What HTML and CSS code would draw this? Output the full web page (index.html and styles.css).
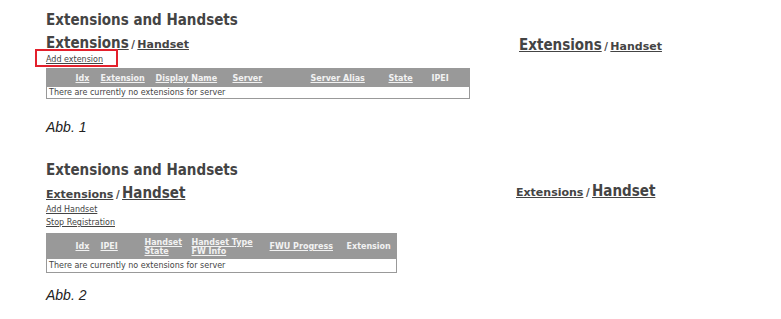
FILE: index.html
```html
<!DOCTYPE html>
<html>
  <head>
    <meta charset="utf8" />
    <title> Extensions and Handsets </title>
    <link rel="stylesheet" href="styles.css">
  </head>
  <body>
    <div class="figure first">
      <div class="page">
        <h1>Extensions and Handsets</h1>
        <div class="nav"><a class="big">Extensions</a> / <a>Handset</a></div>
        <div class="links">
          <a class="marked">Add extension</a>
        </div>
        <table class="list ext">
          <colgroup>
            <col style="width:26px"><col style="width:25px"><col style="width:55px"><col style="width:77px">
            <col style="width:78px"><col style="width:78px"><col style="width:43px"><col style="width:41px">
          </colgroup>
          <tr>
            <th></th><th><a>Idx</a></th><th><a>Extension</a></th><th><a>Display Name</a></th>
            <th><a>Server</a></th><th><a>Server Alias</a></th><th><a>State</a></th><th>IPEI</th>
          </tr>
          <tr><td colspan="8">There are currently no extensions for server</td></tr>
        </table>
      </div>
      <div class="nav side"><a class="big">Extensions</a> / <a>Handset</a></div>
    </div>
    <p class="caption">Abb. 1</p>

    <div class="figure second">
      <div class="page">
        <h1>Extensions and Handsets</h1>
        <div class="nav"><a>Extensions</a> / <a class="big">Handset</a></div>
        <div class="links">
          <a>Add Handset</a>
          <a>Stop Registration</a>
        </div>
        <table class="list hs">
          <colgroup>
            <col style="width:26px"><col style="width:25px"><col style="width:44px"><col style="width:47px">
            <col style="width:78px"><col style="width:77px"><col style="width:53px">
          </colgroup>
          <tr>
            <th></th><th><a>Idx</a></th><th><a>IPEI</a></th><th><a>Handset<br>State</a></th>
            <th><a>Handset Type<br>FW Info</a></th><th><a>FWU Progress</a></th><th>Extension</th>
          </tr>
          <tr><td colspan="7">There are currently no extensions for server</td></tr>
        </table>
      </div>
      <div class="nav side"><a>Extensions</a> / <a class="big">Handset</a></div>
    </div>
    <p class="caption last">Abb. 2</p>
  </body>
</html>
```

FILE: styles.css
```css
body {
  margin: 0;
  padding: 12px 0 0 46px;
  font-family: "DejaVu Sans", Verdana, sans-serif;
  color: #444;
  background: #fff;
}
a {
  color: #444;
  text-decoration: underline;
}
.figure {
  display: flex;
  align-items: flex-start;
}
.first .page {
  width: 473px;
}
.second .page {
  width: 470px;
}
h1 {
  margin: 0;
  font-family: "DejaVu Sans Condensed", "DejaVu Sans", sans-serif;
  font-size: 15px;
  font-weight: bold;
  line-height: 17px;
  height: 17px;
}
.nav {
  margin-top: 6px;
  height: 17px;
  font-size: 10px;
  font-weight: bold;
  line-height: 17px;
  word-spacing: -1px;
}
.nav a {
  font-size: 11px;
}
.nav a.big {
  font-family: "DejaVu Sans Condensed", "DejaVu Sans", sans-serif;
  font-size: 15px;
}
.first .nav.side {
  margin-top: 25px;
}
.second .nav.side {
  margin-top: 21px;
}
.links {
  margin-top: 1px;
  font-size: 8px;
  line-height: 13px;
}
.links a {
  display: block;
  height: 13px;
}
.marked {
  position: relative;
  display: inline-block !important;
}
.marked::after {
  content: "";
  position: absolute;
  left: -11px;
  right: -15px;
  top: -4px;
  bottom: -1px;
  border: 2px solid #e3202c;
}
.list {
  table-layout: fixed;
  border-collapse: collapse;
  border: 1px solid #999;
  font-size: 8px;
}
.list th {
  background: #999;
  color: #f2f2f2;
  font-weight: bold;
  text-align: left;
  padding: 0 3px;
  height: 18px;
  line-height: 9px;
  white-space: nowrap;
}
.list th a {
  color: #f2f2f2;
}
.list td {
  padding: 0 2px;
  height: 11px;
  line-height: 11px;
  color: #444;
}
.ext {
  width: 423px;
  margin-top: 2px;
}
.hs {
  width: 350px;
  margin-top: 4px;
}
.hs th {
  height: 25px;
}
.hs td {
  height: 13px;
}
.caption {
  margin: 20px 0 27px;
  height: 16px;
  font-family: "Liberation Sans", Arial, sans-serif;
  font-style: italic;
  font-size: 14px;
  line-height: 16px;
  color: #222;
}
.caption.last {
  margin: 14px 0 0;
}
```
